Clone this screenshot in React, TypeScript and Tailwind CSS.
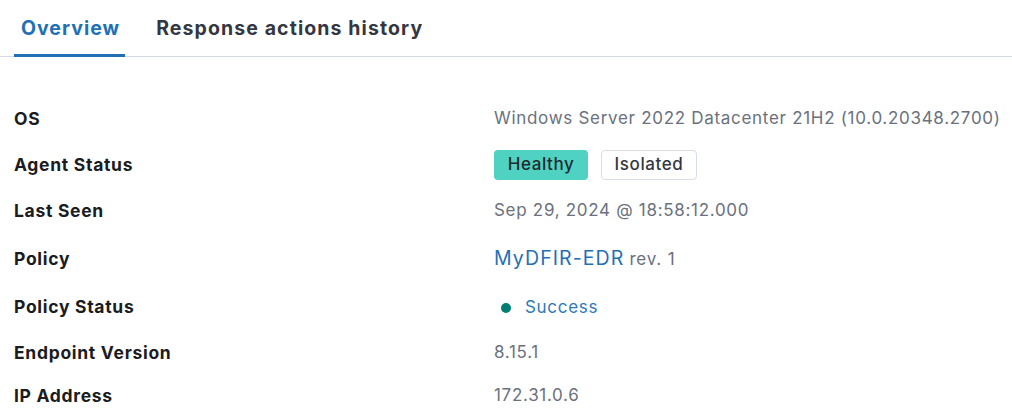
const rows: { label: string; h: string; value: React.ReactNode }[] = [
  {
    label: "OS",
    h: "h-[46px]",
    value: <span>Windows Server 2022 Datacenter 21H2 (10.0.20348.2700)</span>,
  },
  {
    label: "Agent Status",
    h: "h-[46px]",
    value: (
      <div className="flex items-center gap-[13px]">
        <span className="h-[30px] w-[94px] rounded-[4px] bg-[#4fd2c2] text-[#1d2b2e] flex items-center justify-center text-[17px] font-medium tracking-[0.6px]">
          Healthy
        </span>
        <span className="h-[30px] w-[96px] rounded-[4px] border border-[#d9dee6] bg-white text-[#343741] flex items-center justify-center text-[17px] font-medium tracking-[0.6px]">
          Isolated
        </span>
      </div>
    ),
  },
  {
    label: "Last Seen",
    h: "h-[46px]",
    value: <span>Sep 29, 2024 @ 18:58:12.000</span>,
  },
  {
    label: "Policy",
    h: "h-[50px]",
    value: (
      <span className="flex items-baseline gap-[5px]">
        <span className="text-[19.5px] tracking-[1.1px] text-[#1f70b5]">MyDFIR-EDR</span>
        <span className="text-[17px] tracking-[0.8px] text-[#69707d]">rev. 1</span>
      </span>
    ),
  },
  {
    label: "Policy Status",
    h: "h-[47px]",
    value: (
      <span className="flex items-center">
        <span className="ml-[7px] w-[10px] h-[10px] rounded-full bg-[#017d73]" />
        <span className="ml-[14px] text-[#2d7ab8]">Success</span>
      </span>
    ),
  },
  {
    label: "Endpoint Version",
    h: "h-[44px]",
    value: <span>8.15.1</span>,
  },
  {
    label: "IP Address",
    h: "h-[42px]",
    value: <span>172.31.0.6</span>,
  },
];

export default function App() {
  return (
    <div className="w-[1012px] h-[410px] bg-white overflow-hidden font-['Inter',sans-serif]">
      {/* Tabs */}
      <div className="h-[57px] border-b border-[#d3dae6] flex items-stretch pl-[14px] gap-[24px]">
        <div className="relative pl-[7px] pr-[5px] flex items-center pt-[1px]">
          <span className="text-[19.5px] font-bold tracking-[1px] text-[#1f70b5]">Overview</span>
          <span className="absolute left-0 right-0 -bottom-[1px] h-[3px] bg-[#1f70b5]" />
        </div>
        <div className="px-[7px] flex items-center pt-[1px]">
          <span className="text-[19.5px] font-bold tracking-[1.1px] text-[#343741]">Response actions history</span>
        </div>
      </div>

      {/* Details */}
      <div className="pt-[39px] pl-[14px]">
        {rows.map((r) => (
          <div key={r.label} className={`${r.h} flex items-center`}>
            <div className="w-[480px] text-[17.5px] font-bold tracking-[0.7px] text-[#1a1c21]">{r.label}</div>
            <div className="text-[17px] tracking-[0.7px] text-[#6a717d]">{r.value}</div>
          </div>
        ))}
      </div>
    </div>
  );
}
